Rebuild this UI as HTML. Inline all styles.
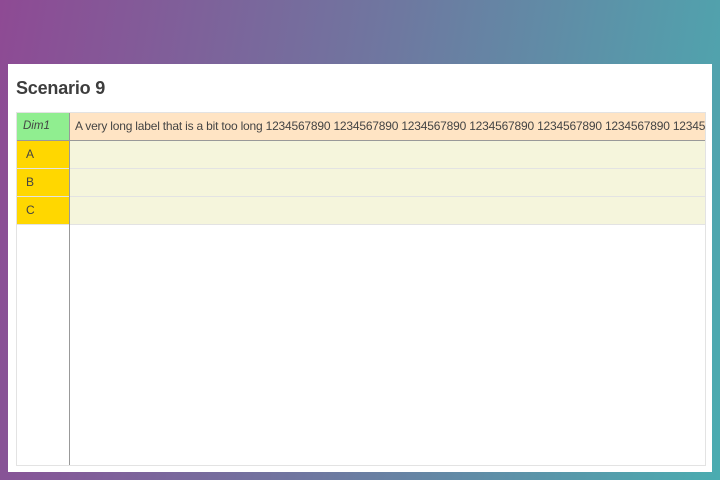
<!DOCTYPE html>
<html><head><style>
*{margin:0;padding:0;box-sizing:border-box}
body{width:720px;height:480px;overflow:hidden;background:linear-gradient(100deg,#8e4a94 0%,#6e78a0 50%,#4aacb0 100%);font-family:"Liberation Sans",sans-serif;color:#444;position:relative}
.panel{position:absolute;left:8px;top:64px;width:704px;height:408px;background:#fff}
h1{position:absolute;left:8px;top:14px;font-size:18px;font-weight:bold;color:#3d3d3d;letter-spacing:-0.2px}
.grid{position:absolute;left:8px;top:48px;width:690px;height:354px;border:1px solid #e3e3e3;overflow:hidden}
.vline{position:absolute;left:52px;top:0;width:1px;height:100%;background:#999}
.row{position:absolute;left:0;width:100%;height:28px;border-bottom:1px solid #e3e3e3}
.c1{position:absolute;left:0;top:0;width:52px;height:100%;font-size:12px;line-height:27px;padding-left:9px}
.c2{position:absolute;left:53px;top:0;right:0;height:100%;font-size:12px;line-height:27px;padding-left:5px;white-space:nowrap;overflow:hidden;letter-spacing:-0.2px}
</style></head><body>
<div class="panel">
<h1>Scenario 9</h1>
<div class="grid">
<div class="row" style="top:0;border-bottom:1px solid #999"><div class="c1" style="background:#90ee90;font-style:italic;padding-left:6px;font-size:11.5px">Dim1</div><div class="c2" style="background:#ffe4c4">A very long label that is a bit too long 1234567890 1234567890 1234567890 1234567890 1234567890 1234567890 1234567890</div></div>
<div class="row" style="top:28px"><div class="c1" style="background:#ffd700">A</div><div class="c2" style="background:#f5f5dc"></div></div>
<div class="row" style="top:56px"><div class="c1" style="background:#ffd700">B</div><div class="c2" style="background:#f5f5dc"></div></div>
<div class="row" style="top:84px"><div class="c1" style="background:#ffd700">C</div><div class="c2" style="background:#f5f5dc"></div></div>
<div class="vline"></div>
</div>
</div>
</body></html>
